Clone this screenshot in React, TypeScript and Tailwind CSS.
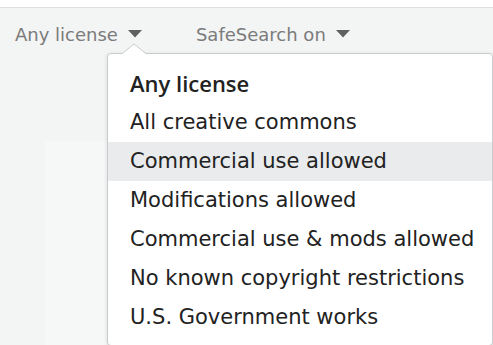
import React from 'react';

const options = [
  'Any license',
  'All creative commons',
  'Commercial use allowed',
  'Modifications allowed',
  'Commercial use & mods allowed',
  'No known copyright restrictions',
  'U.S. Government works',
];

function Caret() {
  return (
    <svg className="ml-[10px]" width="14" height="8" viewBox="0 0 14 8">
      <path d="M0 0 H14 L7 7.5 Z" fill="#5f6061" />
    </svg>
  );
}

export default function App() {
  return (
    <div className="relative h-[345px] w-[493px] overflow-hidden bg-white font-['DejaVu_Sans',sans-serif]">
      <div className="h-[7px] bg-white" />
      <div className="relative h-[338px] border-t border-[#dedfe0] bg-[#f3f4f4]">
        {/* filter bar */}
        <div className="flex h-[50px] items-center pl-[15px] pt-[2px] text-[18px] text-[#7b7b7b]">
          <button className="flex items-center">
            Any license
            <Caret />
          </button>
          <button className="ml-[54px] flex items-center">
            SafeSearch on
            <Caret />
          </button>
        </div>

        {/* faint card behind the menu */}
        <div className="absolute left-[45px] top-[133px] h-[220px] w-[80px] bg-[#f6f7f7]" />

        {/* license menu */}
        <div className="absolute left-[107px] top-[45px] w-[386px] rounded-[4px] border border-[#c9cbcc] bg-white pb-[8px] pt-[10px] shadow-[0_1px_4px_rgba(0,0,0,0.12)]">
          <svg
            className="absolute -top-[11px] left-[12px]"
            width="28"
            height="12"
            viewBox="0 0 28 12"
          >
            <path d="M1 11.5 L14 1 L27 11.5" fill="#ffffff" stroke="#c9cbcc" strokeWidth="1" />
            <rect x="0" y="11.2" width="28" height="2" fill="#ffffff" />
          </svg>
          {options.map((o, i) => (
            <div
              key={o}
              className={`flex h-[39px] items-center pl-[22px] text-[#222] ${
                i === 0 ? "font-['Open_Sans',sans-serif] text-[22px] font-semibold" : 'text-[21px]'
              } ${i === 2 ? 'bg-[#e9ebec]' : ''}`}
            >
              {o}
            </div>
          ))}
        </div>
      </div>
    </div>
  );
}
